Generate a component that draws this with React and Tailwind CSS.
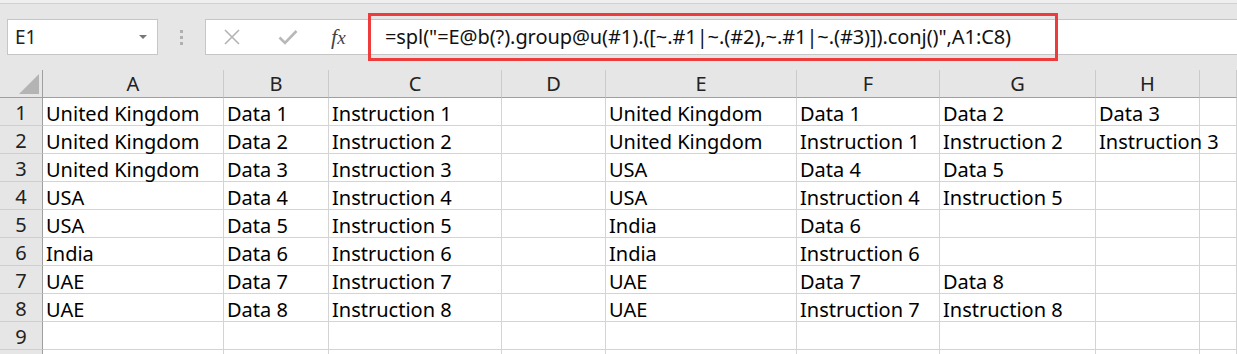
import React from 'react';

const cols = ['A', 'B', 'C', 'D', 'E', 'F', 'G', 'H', ''];

const rows = [
    ['United Kingdom', 'Data 1', 'Instruction 1', '', 'United Kingdom', 'Data 1', 'Data 2', 'Data 3', ''],
    ['United Kingdom', 'Data 2', 'Instruction 2', '', 'United Kingdom', 'Instruction 1', 'Instruction 2', 'Instruction 3', ''],
    ['United Kingdom', 'Data 3', 'Instruction 3', '', 'USA', 'Data 4', 'Data 5', '', ''],
    ['USA', 'Data 4', 'Instruction 4', '', 'USA', 'Instruction 4', 'Instruction 5', '', ''],
    ['USA', 'Data 5', 'Instruction 5', '', 'India', 'Data 6', '', '', ''],
    ['India', 'Data 6', 'Instruction 6', '', 'India', 'Instruction 6', '', '', ''],
    ['UAE', 'Data 7', 'Instruction 7', '', 'UAE', 'Data 7', 'Data 8', '', ''],
    ['UAE', 'Data 8', 'Instruction 8', '', 'UAE', 'Instruction 7', 'Instruction 8', '', ''],
    ['', '', '', '', '', '', '', '', ''],
    ['', '', '', '', '', '', '', '', ''],
];

const formula = '=spl("=E@b(?).group@u(#1).([~.#1|~.(#2),~.#1|~.(#3)]).conj()",A1:C8)';

const FormulaBar = () => (
    <div className="relative flex items-stretch h-[36px] mt-[15px] shrink-0">
        {/* Name box */}
        <div className="ml-[7px] w-[151px] bg-white border border-[#c6c6c6] flex items-center justify-between pl-[7px] pr-[10px]">
            <span className="text-[19px] text-[#222]">E1</span>
            <span className="w-0 h-0 border-l-[4px] border-r-[4px] border-t-[4px] border-l-transparent border-r-transparent border-t-[#777]" />
        </div>
        {/* grip dots */}
        <div className="w-[47px] flex flex-col items-center justify-center gap-[3px]">
            <span className="w-[3px] h-[3px] bg-[#b0b0b0]" />
            <span className="w-[3px] h-[3px] bg-[#b0b0b0]" />
            <span className="w-[3px] h-[3px] bg-[#b0b0b0]" />
        </div>
        {/* cancel / enter / fx */}
        <div className="w-[163px] bg-white border border-[#c6c6c6] border-r-0 flex items-center">
            <svg className="ml-[18px]" width="16" height="16" viewBox="0 0 16 16">
                <path d="M1 1L15 15M15 1L1 15" stroke="#b4b4b4" strokeWidth="1.6" fill="none" />
            </svg>
            <svg className="ml-[38px]" width="20" height="16" viewBox="0 0 20 16">
                <path d="M1.5 8.5L7 14L18.5 2" stroke="#b8b8b8" strokeWidth="2.6" fill="none" />
            </svg>
            <span className="ml-[33px] text-[22px] italic text-[#444] leading-none" style={{ fontFamily: '"Liberation Serif", serif' }}>
                f<span className="text-[19px]">x</span>
            </span>
        </div>
        {/* input */}
        <div className="flex-1 bg-white border border-[#c6c6c6] border-r-0 flex items-center pl-[16px]">
            <span className="text-[20px] text-[#111] whitespace-nowrap tracking-[-0.08px]">{formula}</span>
        </div>
        {/* highlight annotation */}
        <div className="absolute left-[368px] top-[-6px] w-[690px] h-[48px] border-[3px] border-[#ee3b3b] pointer-events-none" />
    </div>
);

const Grid = () => (
    <div className="mt-[15px] shrink-0 grid grid-cols-[43px_181px_105px_173px_104px_191px_143px_156px_104px_1fr] auto-rows-[28px]">
        {/* corner */}
        <div className="relative bg-[#e6e6e6] border-r border-b border-[#9f9f9f]">
            <svg className="absolute right-[3px] bottom-[3px]" width="20" height="20" viewBox="0 0 20 20">
                <path d="M20 0L20 20L0 20Z" fill="#b4b4b4" />
            </svg>
        </div>
        {cols.map((c, i) => (
            <div key={'h' + i} className="bg-[#e6e6e6] border-r border-r-[#cbcbcb] border-b border-b-[#9f9f9f] flex items-center justify-center pt-[1px] text-[20px] text-[#222]">
                {c}
            </div>
        ))}
        {rows.map((r, ri) => (
            <React.Fragment key={ri}>
                <div className="bg-[#e6e6e6] border-r border-r-[#9f9f9f] border-b border-b-[#cfcfcf] flex items-center justify-center pt-[3px] text-[20px] text-[#222]">
                    {ri < 9 ? ri + 1 : ''}
                </div>
                {r.map((v, ci) => (
                    <div key={ci} className="bg-white border-r border-b border-[#d4d4d4] flex items-center pl-[3px] pt-[4px] text-[20px] text-black whitespace-nowrap">
                        <span className="relative z-10">{v}</span>
                    </div>
                ))}
            </React.Fragment>
        ))}
    </div>
);

export default function App() {
    return (
        <div className="w-[1237px] h-[354px] overflow-hidden bg-[#e6e6e6] flex flex-col" style={{ fontFamily: '"Noto Sans", "Noto Sans CJK SC", sans-serif' }}>
            <div className="h-[4px] bg-[#efefef] border-b border-[#d2d2d2] shrink-0" />
            <FormulaBar />
            <Grid />
        </div>
    );
}
